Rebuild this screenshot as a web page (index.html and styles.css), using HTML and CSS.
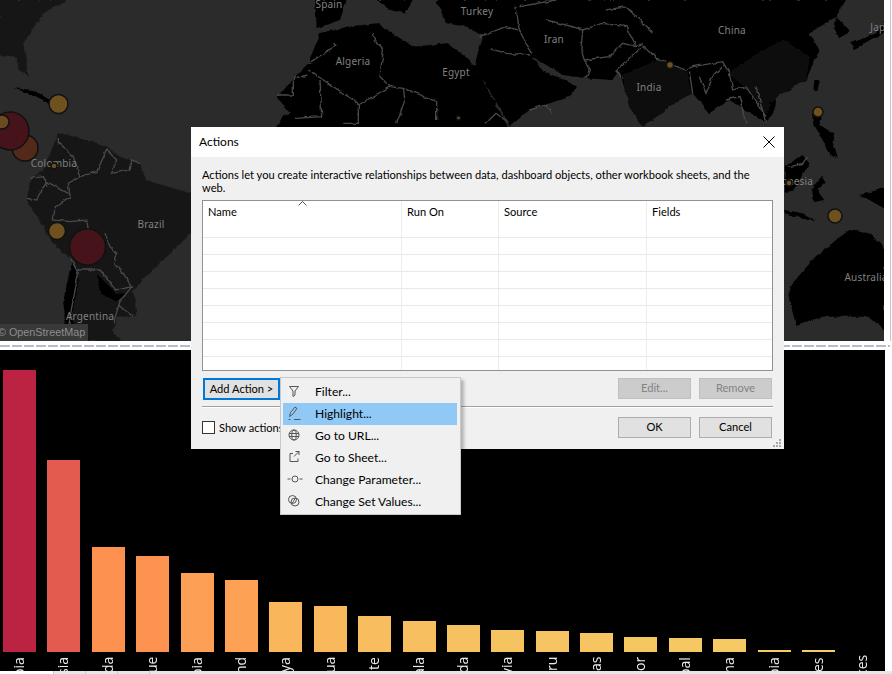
FILE: index.html
```html
<!DOCTYPE html>
<html lang="en">
<head>
<meta charset="utf-8">
<title>Actions</title>
<link rel="stylesheet" href="styles.css">
</head>
<body>
<div class="stage">
  <div class="map-row">
    <div class="map">
      <svg class="map-svg" width="884" height="341" viewBox="0 0 884 341">
        <defs>
          <filter id="rough" x="-5%" y="-5%" width="110%" height="110%">
            <feTurbulence type="fractalNoise" baseFrequency="0.045" numOctaves="3" seed="4"/>
            <feDisplacementMap in="SourceGraphic" scale="11" xChannelSelector="R" yChannelSelector="G"/>
          </filter>
        </defs>
        <g class="zoomed" filter="url(#rough)">
          <polygon class="land-sa" points="0,0 200,0 130,40 70,130 85,230 60,210 50,170 0,165"/>
          <polygon class="land" points="40,265 100,270 150,300 205,320 150,312 100,285"/>
          <polygon class="land" points="945,0 1040,0 1020,60 950,85"/>
          <polygon class="land" points="1130,0 1240,0 1215,40 1170,30"/>
          <polygon class="land" points="830,290 880,235 925,190 960,100 1040,80 1130,70 1240,140 1340,130 1410,180 1425,200 1520,370 1530,420 830,420 830,380 850,345 870,340"/>
          <polygon class="land-sa" points="175,400 215,405 260,420 320,440 360,470 420,490 440,540 520,565 573,580 573,700 480,790 400,870 410,950 350,950 340,990 360,1023 200,1023 190,900 215,780 160,730 80,600 90,540 130,510"/>
          <polygon class="land" points="215,790 240,830 215,950 240,1023 200,1023 190,900"/>
          <polygon class="land" points="290,820 350,880 380,880 350,905 300,880"/>
        </g>
        <g class="zoomed zoomed-east" filter="url(#rough)">
          <polygon class="land" points="-30,0 0,70 60,80 110,110 85,200 190,370 190,380 250,330 370,290 390,260 350,235 290,215 260,170 350,225 420,235 500,240 520,210 550,320 590,380 700,300 740,280 790,340 850,300 960,370 985,330 990,290 1080,240 1120,150 1090,100 1170,50 1200,0"/>
          <polygon class="land-mid" points="530,225 640,180 720,215 735,280 700,300 590,380 550,320"/>
          <polygon class="land-mid" points="850,220 920,170 1010,120 1090,170 1080,240 990,290 960,340 900,260"/>
          <polygon class="land" points="1170,50 1210,90 1180,115 1165,85"/>
          <polygon class="land" points="1215,130 1290,100 1314,65 1314,100 1260,130 1225,150"/>
          <polygon class="land" points="1105,240 1122,240 1115,272 1102,268"/>
          <polygon class="land" points="970,310 990,300 988,320 975,322"/>
          <polygon class="land" points="1100,330 1125,340 1120,375 1150,395 1165,400 1160,425 1175,470 1150,465 1130,420 1105,375"/>
          <polygon class="land" points="1016,500 1070,465 1090,490 1040,575 1016,580"/>
          <polygon class="land" points="1095,570 1125,530 1140,545 1115,565 1135,600 1100,605"/>
          <polygon class="land" points="1016,630 1070,640 1110,660 1070,655 1016,640"/>
          <polygon class="land" points="1240,585 1314,565 1314,625 1270,600"/>
          <polygon class="land" points="1030,860 1100,780 1170,720 1210,690 1270,700 1314,740 1314,990 1270,950 1130,950 1050,975 1030,900"/>
        </g>
        <g class="zoomed borders" filter="url(#rough)">
          <polyline points="175,410 175,430 220,470 240,530 290,515 320,450 350,480 335,520 390,510 395,480 420,490"/>
          <polyline points="240,530 205,550 210,590 165,620 160,660 210,665 260,660 265,690"/>
          <polyline points="315,700 330,740 350,760 345,790 370,820 395,860 360,905 340,970"/>
          <polyline points="80,595 110,600 140,545 205,580"/>
          <polyline points="90,535 130,530 145,560"/>
          <polyline points="210,770 235,820 210,950 200,1020"/>
          <polyline points="235,810 300,810 350,870 395,860"/>
          <polyline points="355,915 400,950"/>
          <polyline points="925,210 1060,300 1075,315 1170,260 1210,265 1310,305 1310,360"/>
          <polyline points="1120,100 1130,130 1150,150 1140,230 1170,260"/>
          <polyline points="1210,265 1215,300 1190,370"/>
          <polyline points="960,240 965,350 885,355"/>
          <polyline points="1075,315 1075,370 1030,370"/>
          <polyline points="925,225 880,235 880,285 830,285"/>
          <polyline points="1000,130 1010,135 925,190"/>
        </g>
        <g class="zoomed zoomed-east borders" filter="url(#rough)">
          <polyline points="210,20 220,90 240,130 260,160"/>
          <polyline points="100,110 180,80 215,90"/>
          <polyline points="130,145 180,160 255,165"/>
          <polyline points="300,60 380,80 410,90 470,70 540,80 570,140"/>
          <polyline points="410,90 405,150 415,180 430,210 420,235"/>
          <polyline points="415,180 490,170 530,130 570,140 590,130"/>
          <polyline points="590,140 510,210 530,235"/>
          <polyline points="590,135 640,180 720,210 740,200 830,185 850,220 860,270 900,260 960,350"/>
          <polyline points="730,215 740,280"/>
          <polyline points="760,230 780,280 800,230 830,200"/>
          <polyline points="840,300 880,290 900,370"/>
          <polyline points="930,260 960,370"/>
          <polyline points="220,20 330,0"/>
          <polyline points="480,30 540,20 620,100"/>
          <polyline points="250,330 300,315 320,340"/>
          <polyline points="120,370 150,340 190,370"/>
          <polyline points="1030,500 1070,490 1085,470"/>
        </g>
        <g class="bubbles">
          <circle class="b-orange" cx="25" cy="148" r="13"/>
          <circle class="b-red" cx="10" cy="131" r="19"/>
          <circle class="b-amber" cx="2" cy="122" r="7"/>
          <circle class="b-gold" cx="58.500" cy="104" r="9.500"/>
          <circle class="b-gold" cx="57" cy="231" r="8.500"/>
          <circle class="b-red" cx="87.500" cy="247" r="18"/>
          <circle class="b-gold" cx="670" cy="65" r="3.500"/>
          <circle class="b-gold" cx="458.500" cy="118" r="2"/>
          <circle class="b-gold" cx="818" cy="112" r="5"/>
          <circle class="b-gold" cx="835" cy="216" r="7"/>
        </g>
        <g class="labels">
          <text x="329" y="8">Spain</text>
          <text x="353" y="65">Algeria</text>
          <text x="54" y="167">Colombia</text>
          <text x="151" y="228">Brazil</text>
          <text x="90" y="320">Argentina</text>
          <text x="477" y="15">Turkey</text>
          <text x="554" y="43">Iran</text>
          <text x="456" y="76">Egypt</text>
          <text x="732" y="34">China</text>
          <text x="649" y="91">India</text>
          <text x="884" y="31">Japan</text>
          <text x="789" y="185">Indonesia</text>
          <text x="866" y="281">Australia</text>
        </g>
        <g class="bubbles">
          <circle class="b-gold" cx="54" cy="166" r="3"/>
          <circle class="b-gold" cx="789" cy="183" r="3"/>
        </g>
        <rect class="osm-bg" x="0" y="324" width="88" height="17"/>
        <text class="osm" x="-2" y="336">© OpenStreetMap</text>
      </svg>
    </div>
    <div class="map-gutter"></div>
  </div>
  <div class="splitter"><div class="splitter-line"></div></div>
  <div class="chart-row">
    <div class="chart">
      <div class="col"><div class="plot"><div class="bar" style="height:282px;background:#bc2343"></div></div><div class="lbl">bia</div></div>
      <div class="col"><div class="plot"><div class="bar" style="height:192px;background:#e35a4e"></div></div><div class="lbl">sia</div></div>
      <div class="col"><div class="plot"><div class="bar" style="height:105px;background:#fd9150"></div></div><div class="lbl">da</div></div>
      <div class="col"><div class="plot"><div class="bar" style="height:96px;background:#fd9350"></div></div><div class="lbl">ue</div></div>
      <div class="col"><div class="plot"><div class="bar" style="height:79px;background:#fd9f54"></div></div><div class="lbl">bia</div></div>
      <div class="col"><div class="plot"><div class="bar" style="height:72px;background:#fda254"></div></div><div class="lbl">nd</div></div>
      <div class="col"><div class="plot"><div class="bar" style="height:50px;background:#f9b65b"></div></div><div class="lbl">ya</div></div>
      <div class="col"><div class="plot"><div class="bar" style="height:46px;background:#f9b85c"></div></div><div class="lbl">ua</div></div>
      <div class="col"><div class="plot"><div class="bar" style="height:36px;background:#f7bd5e"></div></div><div class="lbl">te</div></div>
      <div class="col"><div class="plot"><div class="bar" style="height:31px;background:#f7bf5f"></div></div><div class="lbl">ala</div></div>
      <div class="col"><div class="plot"><div class="bar" style="height:27px;background:#f6c160"></div></div><div class="lbl">da</div></div>
      <div class="col"><div class="plot"><div class="bar" style="height:22px;background:#f6c361"></div></div><div class="lbl">via</div></div>
      <div class="col"><div class="plot"><div class="bar" style="height:21px;background:#f6c462"></div></div><div class="lbl">ru</div></div>
      <div class="col"><div class="plot"><div class="bar" style="height:19px;background:#f6c562"></div></div><div class="lbl">as</div></div>
      <div class="col"><div class="plot"><div class="bar" style="height:15px;background:#f5c763"></div></div><div class="lbl">or</div></div>
      <div class="col"><div class="plot"><div class="bar" style="height:14px;background:#f5c863"></div></div><div class="lbl">bal</div></div>
      <div class="col"><div class="plot"><div class="bar" style="height:13px;background:#f5c964"></div></div><div class="lbl">ma</div></div>
      <div class="col"><div class="plot"><div class="bar" style="height:2px;background:#f5cd66"></div></div><div class="lbl">bia</div></div>
      <div class="col"><div class="plot"><div class="bar" style="height:2px;background:#f5cd66"></div></div><div class="lbl">es</div></div>
      <div class="col"><div class="plot"></div><div class="lbl lbl-high">ces</div></div>
    </div>
  </div>
  <div class="tabs">
    <div class="tab tab-on"></div><div class="tab"></div><div class="tab"></div><div class="tab"></div>
  </div>

  <div class="dialog">
    <div class="titlebar">
      <span class="title">Actions</span>
      <svg class="close" width="12" height="12" viewBox="0 0 12 12"><path d="M.5.5l11 11M11.500.5l-11 11"/></svg>
    </div>
    <div class="dlg-body">
      <p class="intro">Actions let you create interactive relationships between data, dashboard objects, other workbook sheets, and the web.</p>
      <div class="tbl">
        <div class="tr th">
          <div class="td td-name">Name<svg class="caret" width="9" height="5" viewBox="0 0 9 5"><path d="M.5 4.500l4-4 4 4"/></svg></div><div class="td td-run">Run On</div><div class="td td-src">Source</div><div class="td td-fld">Fields</div>
        </div>
        <div class="tr"><div class="td td-name"></div><div class="td td-run"></div><div class="td td-src"></div><div class="td td-fld"></div></div>
        <div class="tr"><div class="td td-name"></div><div class="td td-run"></div><div class="td td-src"></div><div class="td td-fld"></div></div>
        <div class="tr"><div class="td td-name"></div><div class="td td-run"></div><div class="td td-src"></div><div class="td td-fld"></div></div>
        <div class="tr"><div class="td td-name"></div><div class="td td-run"></div><div class="td td-src"></div><div class="td td-fld"></div></div>
        <div class="tr"><div class="td td-name"></div><div class="td td-run"></div><div class="td td-src"></div><div class="td td-fld"></div></div>
        <div class="tr"><div class="td td-name"></div><div class="td td-run"></div><div class="td td-src"></div><div class="td td-fld"></div></div>
        <div class="tr"><div class="td td-name"></div><div class="td td-run"></div><div class="td td-src"></div><div class="td td-fld"></div></div>
        <div class="tr tr-last"><div class="td td-name"></div><div class="td td-run"></div><div class="td td-src"></div><div class="td td-fld"></div></div>
      </div>
      <div class="btn-row">
        <button class="btn btn-add">Add Action &gt;</button>
        <div class="spacer"></div>
        <button class="btn btn-off">Edit...</button>
        <button class="btn btn-off">Remove</button>
      </div>
      <div class="rule"></div>
      <div class="btn-row btn-row-foot">
        <label class="check"><span class="box"></span>Show actions in tooltip</label>
        <div class="spacer"></div>
        <button class="btn">OK</button>
        <button class="btn">Cancel</button>
      </div>
    </div>
    <svg class="grip" width="9" height="9" viewBox="0 0 9 9"><path d="M6 0h2v2H6zM3 3h2v2H3zM6 3h2v2H6zM0 6h2v2H0zM3 6h2v2H3zM6 6h2v2H6z"/></svg>
  </div>

  <div class="menu">
    <div class="item">
      <svg class="ico" width="14" height="14" viewBox="0 0 14 14"><path d="M2.500 2.500h9L8 7v4l-2 1.500V7z"/></svg>
      <span>Filter...</span>
    </div>
    <div class="item item-on">
      <svg class="ico" width="14" height="14" viewBox="0 0 14 14"><path d="M2.500 10.500l1-4 4.500-5.500 2 1.500-4.500 6zM7 13.500h6.500M1.500 13.500h2"/></svg>
      <span>Highlight...</span>
    </div>
    <div class="item">
      <svg class="ico" width="14" height="14" viewBox="0 0 14 14"><circle cx="7" cy="7" r="5"/><ellipse cx="7" cy="7" rx="2.200" ry="5"/><path d="M2 5.500h10M2 8.500h10"/></svg>
      <span>Go to URL...</span>
    </div>
    <div class="item">
      <svg class="ico" width="14" height="14" viewBox="0 0 14 14"><path d="M6 3.500H3v8h8V8.500M8.500 1.500h3.500V5M12 1.500L7 6.500"/></svg>
      <span>Go to Sheet...</span>
    </div>
    <div class="item">
      <svg class="ico" width="16" height="14" viewBox="0 0 16 14"><circle cx="8" cy="7" r="3"/><path d="M.5 7h3M12.500 7h3"/></svg>
      <span>Change Parameter...</span>
    </div>
    <div class="item">
      <svg class="ico" width="14" height="14" viewBox="0 0 14 14"><circle cx="5.500" cy="5.500" r="4"/><circle cx="8" cy="8" r="4"/><path d="M5 9.500l3.500-5.500"/></svg>
      <span>Change Set Values...</span>
    </div>
  </div>
</div>
</body>
</html>
```

FILE: styles.css
```css
* { box-sizing: border-box; }
html, body { margin: 0; padding: 0; background: #fff; }
.stage {
  position: relative;
  width: 892px;
  height: 674px;
  overflow: hidden;
  display: flex;
  flex-direction: column;
  background: #fff;
  font-family: Lato, "Open Sans", sans-serif;
}

/* map */
.map-row { display: flex; height: 341px; flex: none; }
.map { width: 884px; height: 341px; background: #2b2b2b; flex: none; }
.map-svg { display: block; }
.map-gutter { width: 7px; border-right: 1px solid #c4c4c4; }
.zoomed { transform: scale(.33333); }
.zoomed-east { transform: translateX(446px) scale(.33333); }
.land { fill: #060606; }
.land-mid { fill: #101010; }
.land-sa { fill: #191919; }
.borders polyline { fill: none; stroke: #4a4a4a; stroke-width: 4; }
.bubbles circle { stroke: #111; stroke-width: 1.5; }
.b-red { fill: #47131a; }
.b-orange { fill: #54291a; }
.b-amber { fill: #6b4a20; }
.b-gold { fill: #6f5120; }
.labels text {
  font-family: "Noto Sans", sans-serif;
  font-size: 10px;
  fill: #808080;
  text-anchor: middle;
  letter-spacing: .2px;
}
.osm-bg { fill: #393939; }
.osm { font-family: "Liberation Sans", sans-serif; font-size: 10.800px; fill: #8d8d8d; }

/* splitter */
.splitter { height: 9px; flex: none; padding-top: 4px; width: 890px; }
.splitter-line {
  height: 2px;
  background: repeating-linear-gradient(90deg, #b4bdcf 0 10px, #fff 10px 12px);
}

/* chart */
.chart-row { height: 321px; flex: none; overflow: hidden; }
.chart {
  width: 885px;
  height: 321px;
  background: #000;
  padding-left: 3px;
  display: flex;
  gap: 11.400px;
  overflow: hidden;
}
.col { width: 33px; flex: none; }
.plot { height: 302px; display: flex; align-items: flex-end; }
.bar { width: 33px; }
.lbl {
  height: 40px;
  margin-top: 5px;
  width: 33px;
  padding-right: 6px;
  color: #ececec;
  font: 14px/20px "Open Sans", sans-serif;
  writing-mode: vertical-rl;
  transform: rotate(180deg);
  text-align: right;
}
.lbl-high { margin-top: 3px; }

/* tabs */
.tabs { height: 3px; flex: none; display: flex; background: #e6e6e6; }
.tab { width: 32px; border-right: 1px solid #c8c8c8; }
.tab-on { width: 54px; background: #fff; }

/* dialog */
.dialog {
  position: absolute;
  left: 191px;
  top: 127px;
  width: 593px;
  height: 322px;
  background: #f0f0f0;
  color: #000;
  font-size: 11.100px;
  line-height: 13px;
}
.titlebar {
  height: 30px;
  background: #fff;
  display: flex;
  align-items: center;
  justify-content: space-between;
  padding: 0 9px 0 8px;
}
.title { font-size: 12px; margin-top: -2px; }
.close { fill: none; stroke: #000; stroke-width: 1; }
.dlg-body { padding: 11px 11px 0; }
.intro { margin: 0; height: 32px; }
.tbl { width: 571px; height: 171px; border: 1px solid #8d919b; background: #fff; overflow: hidden; }
.tr { display: flex; height: 17px; border-bottom: 1px solid #e9e9e9; }
.th { height: 37px; padding: 0; }
.tr-last { border-bottom: 0; }
.td { height: 100%; border-right: 1px solid #ececec; padding: 4px 0 0 5px; }
.td-name { width: 199px; position: relative; }
.td-run { width: 97px; }
.td-src { width: 148px; }
.td-fld { flex: 1; border-right: 0; }
.caret { position: absolute; left: 95px; top: 0; fill: none; stroke: #555; }
.btn-row { display: flex; gap: 8px; align-items: flex-start; margin-top: 7px; padding: 0 1px; }
.spacer { flex: 1; }
.btn {
  width: 73px;
  height: 21px;
  padding: 0 0 2px;
  border: 1px solid #adadad;
  border-radius: 0;
  background: #e1e1e1;
  color: #000;
  font: inherit;
}
.btn-add { width: 77px; height: 22px; border: 2px solid #0078d7; }
.btn-off { background: #ccc; border-color: #bfbfbf; color: #838383; }
.rule { height: 2px; margin-top: 6px; background: #a0a0a0; border-bottom: 1px solid #fff; }
.btn-row-foot { margin-top: 9px; padding-left: 0; }
.check { display: flex; align-items: center; gap: 4px; height: 21px; white-space: nowrap; padding-bottom: 1px; }
.box { width: 13px; height: 13px; border: 1px solid #333; background: #fff; flex: none; }
.grip { position: absolute; right: 2px; bottom: 1px; fill: #a8a8a8; }

/* menu */
.menu {
  position: absolute;
  left: 280px;
  top: 377px;
  width: 181px;
  height: 138px;
  padding: 3px 2px;
  background: #f0f0f0;
  border: 1px solid #c9c9c9;
  box-shadow: 3px 3px 3px rgba(0, 0, 0, .25);
  font-size: 12.100px;
  color: #000;
}
.item { height: 22px; width: 174px; display: flex; align-items: center; position: relative; padding: 0 0 2px 32px; }
.item-on { background: #90c8f6; }
.ico { position: absolute; left: 4px; top: 3px; fill: none; stroke: #555; stroke-width: 1; }
```
